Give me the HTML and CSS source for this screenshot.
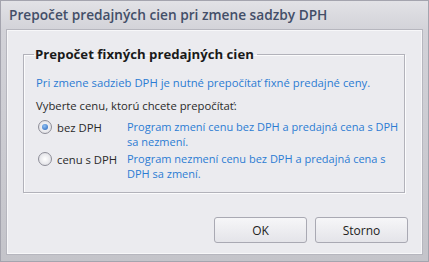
FILE: index.html
```html
<!DOCTYPE html>
<html lang="sk">
<head>
    <meta charset="UTF-8">
    <title>Prepočet predajných cien</title>
    <link rel="stylesheet" href="styles.css">
</head>
<body>
    <div class="window">
        <div class="titlebar">Prepočet predajných cien pri zmene sadzby DPH</div>
        <div class="panel">
            <fieldset class="group">
                <legend>Prepočet fixných predajných cien</legend>
                <p class="info">Pri zmene sadzieb DPH je nutné prepočítať fixné predajné ceny.</p>
                <p class="prompt">Vyberte cenu, ktorú chcete prepočítať:</p>
                <div class="options">
                    <label class="option"><span class="radio checked"></span>bez DPH</label>
                    <div class="desc">Program zmení cenu bez DPH a predajná cena s DPH sa nezmení.</div>
                    <label class="option"><span class="radio"></span>cenu s DPH</label>
                    <div class="desc">Program nezmení cenu bez DPH a predajná cena s DPH sa zmení.</div>
                </div>
            </fieldset>
            <div class="buttons">
                <button>OK</button>
                <button>Storno</button>
            </div>
        </div>
    </div>
</body>
</html>
```

FILE: styles.css
```css
body {
    margin: 0;
    font-family: "Open Sans", "Liberation Sans", sans-serif;
    font-size: 11.3px;
}
.window {
    width: 429px;
    height: 262px;
    box-sizing: border-box;
    background: linear-gradient(#e2e2e6, #d2d2d8 30px, #c4c4ca);
    border: 1px solid #a4a4ae;
    padding: 0 6px 7px 6px;
    display: flex;
    flex-direction: column;
}
.titlebar {
    height: 29px;
    line-height: 28px;
    padding-left: 2px;
    color: #434e68;
    font-weight: 600;
    font-size: 13.7px;
}
.panel {
    flex: 1;
    background: #ebebef;
    border: 1px solid #f7f7f9;
    outline: 1px solid #b6b6be;
    padding: 14px 16px 0 15px;
    display: flex;
    flex-direction: column;
}
.group {
    margin: 0;
    padding: 12px 4px 10px 12px;
    height: 148px;
    box-sizing: border-box;
    border: 1px solid #b2b2ba;
    box-shadow: inset 1px 1px 0 #fbfbfc, 1px 1px 0 #fbfbfc;
}
.group legend {
    padding: 0 3px 0 1px;
    margin-left: -2px;
    font-weight: 700;
    font-size: 13.2px;
    color: #1a1a1a;
}
.info {
    margin: 0 0 7px 0;
    line-height: 16px;
    color: #2b7cd3;
}
.prompt {
    margin: 0 0 5px 0;
    line-height: 16px;
    color: #2a2a2a;
}
.options {
    display: grid;
    grid-template-columns: 91px 1fr;
    row-gap: 2px;
}
.option {
    display: flex;
    align-items: center;
    height: 16px;
    color: #2a2a2a;
}
.radio {
    width: 12px;
    height: 12px;
    border-radius: 50%;
    border: 1px solid #8e8e98;
    background: radial-gradient(circle, #ffffff, #d8d8de);
    margin: 0 5px 0 2px;
    display: flex;
    align-items: center;
    justify-content: center;
}
.radio.checked::after {
    content: "";
    width: 6px;
    height: 6px;
    border-radius: 50%;
    background: radial-gradient(circle at 40% 35%, #8fc0f4, #2462b8);
}
.desc {
    color: #2b7cd3;
    font-size: 11px;
    line-height: 15px;
}
.buttons {
    display: flex;
    justify-content: flex-end;
    gap: 8px;
    margin-top: 24px;
    margin-right: -3px;
}
button {
    width: 93px;
    height: 26px;
    font-family: "Open Sans", "Liberation Sans", sans-serif;
    font-size: 12px;
    color: #222;
    border: 1px solid #a9a9b3;
    border-radius: 3px;
    background: linear-gradient(#f6f6f8, #e4e4e9);
}
```
